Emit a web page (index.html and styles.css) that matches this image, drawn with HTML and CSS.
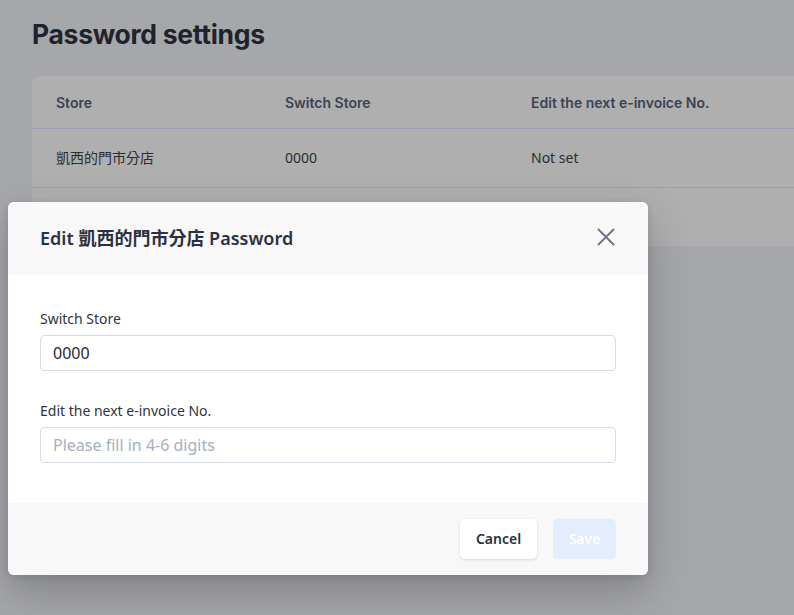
FILE: index.html
```html
<!DOCTYPE html>
<html lang="en">
<head>
<meta charset="utf-8">
<title>Password settings</title>
<link rel="stylesheet" href="styles.css">
</head>
<body>
<main class="page">
  <h1 class="page-title">Password settings</h1>
  <section class="card">
    <div class="row head">
      <div class="cell c1">Store</div>
      <div class="cell c2">Switch Store</div>
      <div class="cell c3">Edit the next e-invoice No.</div>
    </div>
    <div class="row">
      <div class="cell c1">凱西的門市分店</div>
      <div class="cell c2">0000</div>
      <div class="cell c3">Not set</div>
    </div>
    <div class="row last">
      <div class="cell c1"></div>
      <div class="cell c2"></div>
      <div class="cell c3"></div>
    </div>
  </section>
</main>

<div class="modal">
  <header class="modal-head">
    <h2 class="modal-title">Edit 凱西的門市分店 Password</h2>
    <button class="close" aria-label="Close">
      <svg width="18" height="18" viewBox="0 0 18 18"><path d="M1.5 1.5 L16.5 16.5 M16.5 1.5 L1.5 16.5" stroke="#6b7386" stroke-width="1.8" stroke-linecap="round" fill="none"/></svg>
    </button>
  </header>
  <div class="modal-body">
    <div class="field">
      <label class="label">Switch Store</label>
      <div class="input">0000</div>
    </div>
    <div class="field">
      <label class="label">Edit the next e-invoice No.</label>
      <div class="input placeholder">Please fill in 4-6 digits</div>
    </div>
  </div>
  <footer class="modal-foot">
    <button class="btn cancel">Cancel</button>
    <button class="btn save">Save</button>
  </footer>
</div>
</body>
</html>
```

FILE: styles.css
```css
html, body {
  margin: 0;
  padding: 0;
  height: 100%;
  overflow: hidden;
}
body {
  background: #a6a7aa;
  font-family: "Noto Sans", "Noto Sans CJK TC", sans-serif;
  position: relative;
}
.page {
  padding: 19px 0 0 32px;
}
.page-title {
  margin: 0 0 26px 0;
  font-family: Inter, "Noto Sans", sans-serif;
  font-weight: 700;
  font-size: 26.5px;
  line-height: 31px;
  letter-spacing: -0.3px;
  color: #1f232b;
}
.card {
  background: #afafaf;
  border-radius: 8px 0 0 8px;
}
.row {
  display: flex;
  height: 58px;
  align-items: center;
  border-bottom: 1px solid #a1a1a1;
  padding-left: 24px;
}
.row.head {
  height: 52px;
  border-bottom: 1px solid #98a1ad;
}
.row.head + .row .cell {
  margin-top: -2px;
}
.row.last {
  border-bottom: none;
}
.cell {
  font-size: 14px;
  color: #2b2c2e;
}
.head .cell {
  font-family: Inter, "Noto Sans", sans-serif;
  font-weight: 600;
  color: #3b4354;
}
.c1 { width: 229px; }
.c2 { width: 246px; }
.c3 { flex: 1; }

.modal {
  position: absolute;
  left: 8px;
  top: 202px;
  width: 640px;
  border-radius: 6px;
  overflow: hidden;
  background: #fff;
  box-shadow: 0 18px 40px rgba(40, 42, 50, 0.28), 0 2px 6px rgba(40, 42, 50, 0.15);
}
.modal-head {
  height: 73px;
  box-sizing: border-box;
  padding: 0 33px 3px 32px;
  background: #f8f8f8;
  display: flex;
  align-items: center;
  justify-content: space-between;
}
.modal-title {
  margin: 0;
  font-size: 18px;
  font-weight: 600;
  color: #2b3140;
}
.close {
  border: none;
  background: none;
  padding: 0;
  width: 18px;
  height: 18px;
  display: flex;
}
.modal-body {
  padding: 34px 32px 40px;
}
.field + .field {
  margin-top: 30px;
}
.label {
  display: block;
  font-size: 14px;
  line-height: 20px;
  color: #2f3440;
  margin-bottom: 6px;
}
.input {
  height: 34px;
  border: 1px solid #d5dbe4;
  border-radius: 4px;
  padding: 0 12px;
  display: flex;
  align-items: center;
  font-size: 16px;
  color: #262a33;
}
.input.placeholder {
  color: #a6afbe;
}
.modal-foot {
  height: 72px;
  background: #f8f8f8;
  display: flex;
  justify-content: flex-end;
  align-items: center;
  gap: 16px;
  padding: 0 32px;
}
.btn {
  height: 40px;
  border: none;
  border-radius: 5px;
  font-family: "Noto Sans", sans-serif;
  font-size: 14px;
  font-weight: 600;
  padding: 0 0 2px;
}
.cancel {
  width: 77px;
  background: #fff;
  color: #2a3040;
  box-shadow: 0 1px 3px rgba(0, 0, 0, 0.14);
}
.save {
  width: 63px;
  background: #e3edfd;
  color: #fff;
}
```
